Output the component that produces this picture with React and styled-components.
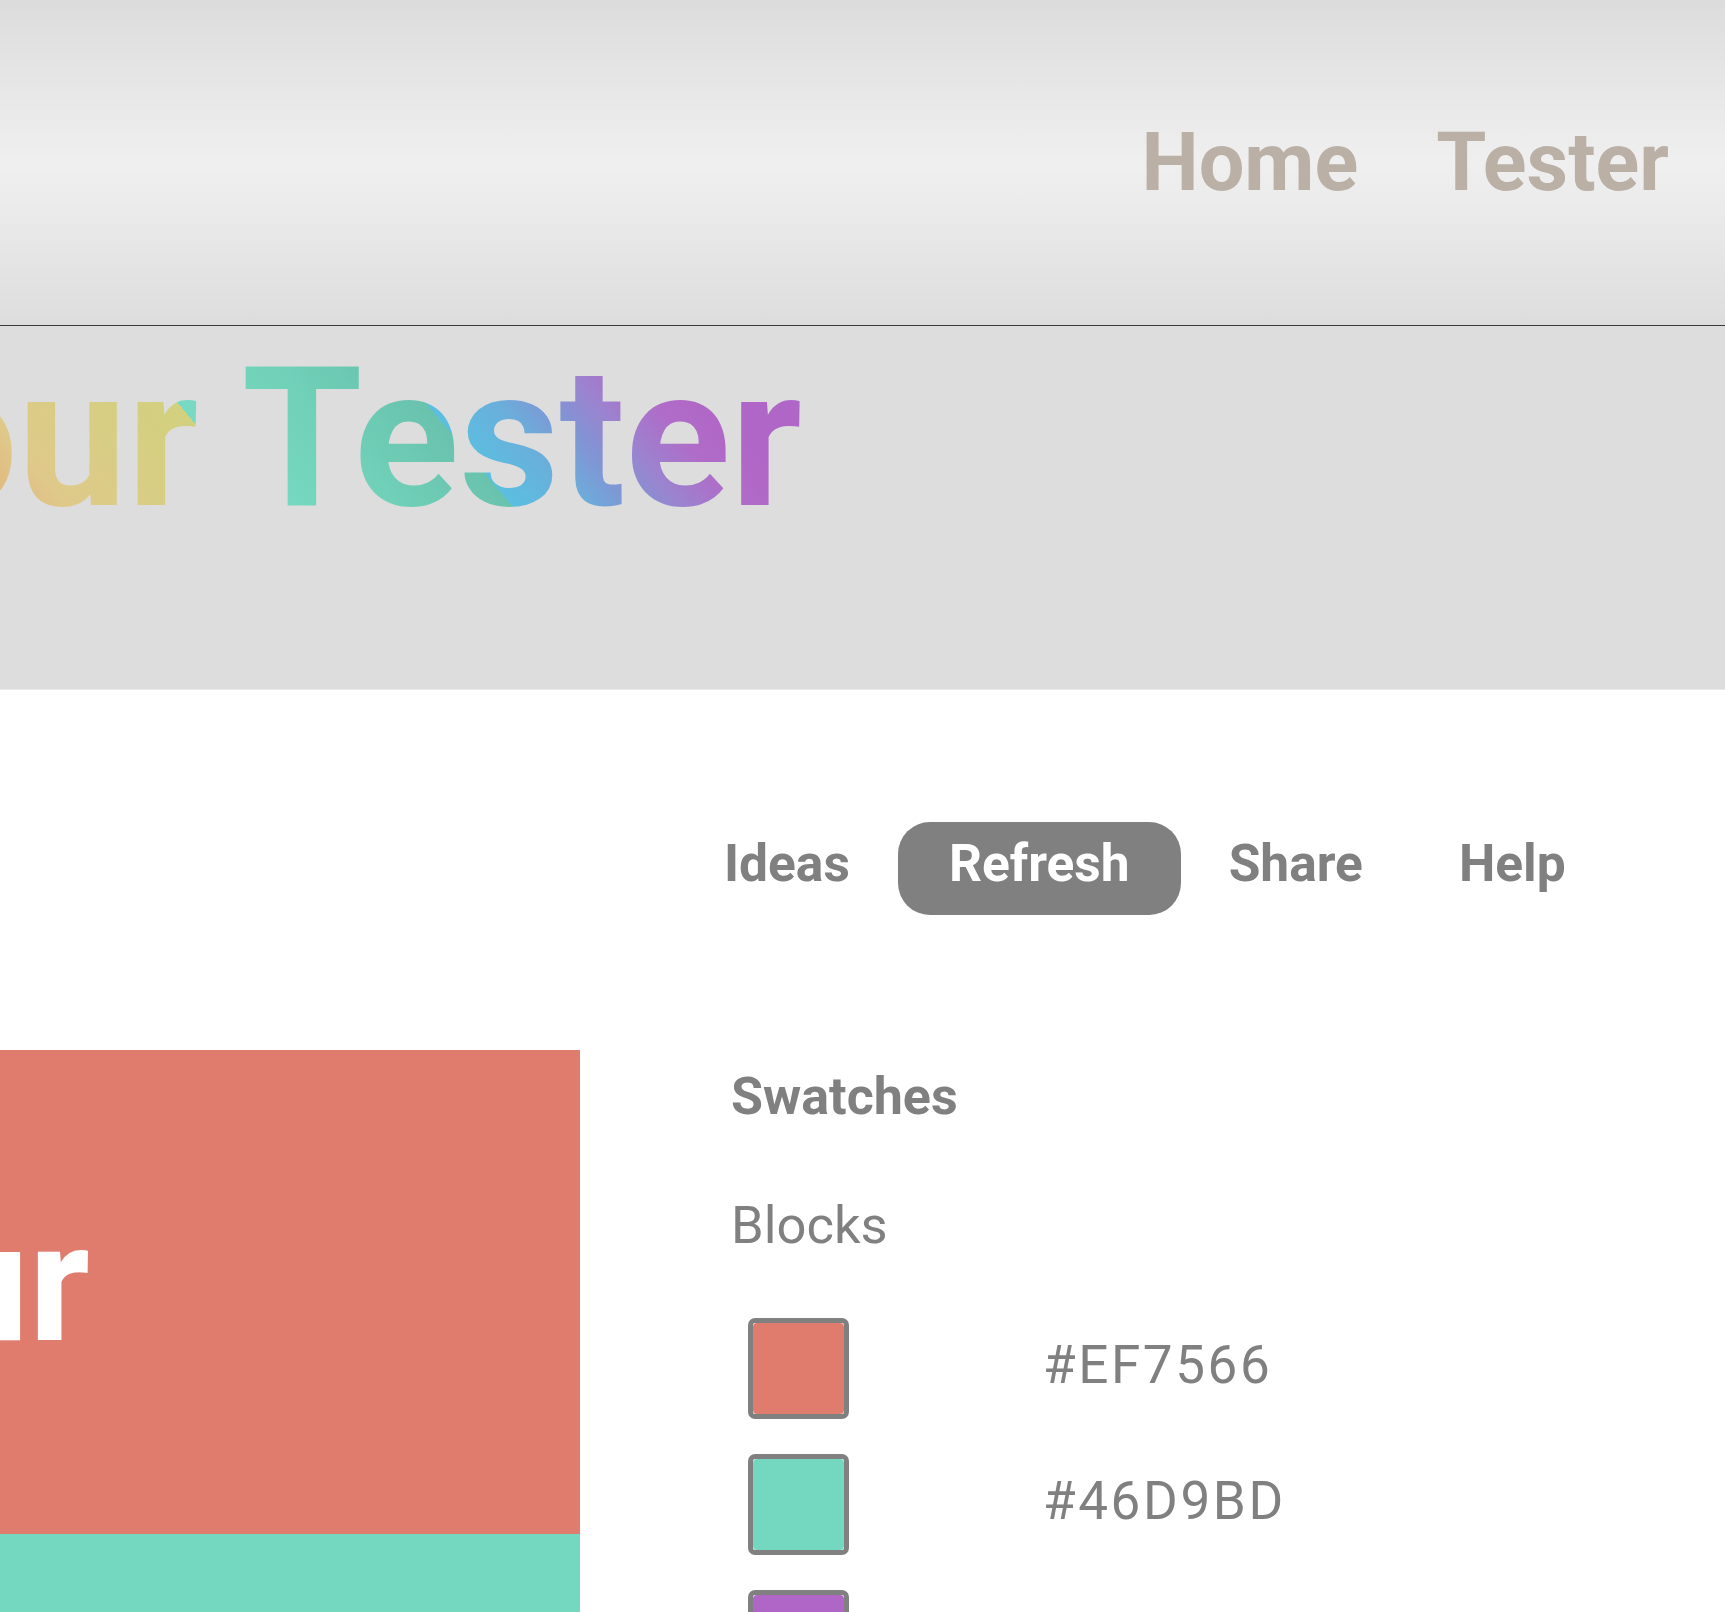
import React from "react"
import styled, { createGlobalStyle } from "styled-components"

const GlobalStyle = createGlobalStyle`
  html, body {
    margin: 0;
    padding: 0;
  }
  body {
    font-family: Roboto, "Liberation Sans", sans-serif;
    background: #ffffff;
  }
  * {
    box-sizing: border-box;
  }
`

const Page = styled.div`
  height: 100vh;
  overflow: hidden;
`

const Header = styled.header`
  height: 326px;
  display: flex;
  align-items: center;
  justify-content: flex-end;
  gap: 78px;
  padding-right: 56px;
  border-bottom: 1px solid #3c3c3c;
  background: linear-gradient(
    to bottom,
    #dcdcdc 0%,
    #e6e6e6 25%,
    #f0eff0 50%,
    #e7e7e7 75%,
    #dddddd 100%
  );
`

const NavLink = styled.a`
  font-size: 81px;
  font-weight: 700;
  color: #bab0a6;
  text-decoration: none;
  &:hover {
    color: #a59a8e;
  }
`

const Band = styled.section`
  height: 364px;
  background: #dddddd;
  border-bottom: 1px solid #e9e9e9;
`

const GradientLayer = styled.div`
  height: 100%;
  padding-top: 15px;
  background: linear-gradient(
    50deg,
    #e3a272 0px,
    #e1b47c 110px,
    #dfc98a 170px,
    #d8cd84 240px,
    #d2d17e 320px,
    #78dac2 320px,
    #70d0b8 420px,
    #69c2ad 510px,
    #5bbfe0 510px,
    #6aaedb 565px,
    #8492d3 610px,
    #9b83cf 640px,
    #b06cc8 685px,
    #b066c6 730px
  );
  -webkit-background-clip: text;
  background-clip: text;
  color: transparent;
`

const TitleRow = styled.div`
  width: 802px;
  display: flex;
  justify-content: flex-end;
`

const Title = styled.h1`
  margin: 0;
  font-size: 195px;
  font-weight: 700;
  line-height: 1;
  white-space: nowrap;
`

const Main = styled.main`
  display: grid;
  grid-template-columns: 580px 1fr;
  column-gap: 96px;
  row-gap: 135px;
  padding-top: 132px;
`

const Toolbar = styled.nav`
  grid-column: 2;
  display: flex;
  justify-self: start;
`

const ToolButton = styled.button`
  border: none;
  padding: ${(p) => (p.$active ? "11px 51px 20px" : "11px 48px 20px")};
  font-family: inherit;
  font-size: 51.5px;
  font-weight: 700;
  line-height: 62px;
  border-radius: 32px;
  cursor: pointer;
  background: ${(p) => (p.$active ? "#808080" : "transparent")};
  color: ${(p) => (p.$active ? "#ffffff" : "#808080")};
`

const BlockStack = styled.div`
  display: flex;
  flex-direction: column;
`

const ColorBlock = styled.div`
  height: 484px;
  padding-top: ${(p) => p.$pad || 0}px;
  background: ${(p) => p.$color};
`

const BlockLabelRow = styled.div`
  width: 90px;
  display: flex;
  justify-content: flex-end;
`

const BlockLabel = styled.span`
  font-size: 167px;
  font-weight: 700;
  line-height: 1;
  color: #ffffff;
  white-space: nowrap;
`

const SwatchPanel = styled.aside`
  padding-left: 55px;
  padding-top: 16px;
  color: #808080;
`

const PanelHeading = styled.h2`
  margin: 0;
  font-size: 52px;
  font-weight: 700;
  line-height: 62px;
`

const SubHeading = styled.h3`
  margin: 66px 0 0;
  font-size: 52.5px;
  font-weight: 400;
  line-height: 62px;
`

const SwatchList = styled.ul`
  list-style: none;
  margin: 62px 0 0;
  padding: 0 0 0 17px;
  display: flex;
  flex-direction: column;
  gap: 35px;
`

const SwatchRow = styled.li`
  display: flex;
  align-items: center;
  gap: 194px;
`

const SwatchBox = styled.div`
  width: 101px;
  height: 101px;
  border: 5px solid #808080;
  border-radius: 7px;
  background: #ffffff;
`

const SwatchFill = styled.div`
  width: 100%;
  height: 100%;
  border-radius: 4px;
  background: ${(p) => p.$color};
`

const HexCode = styled.span`
  font-size: 53px;
  font-weight: 400;
  line-height: 62px;
  letter-spacing: 2.6px;
  margin-bottom: 8px;
`

const swatches = [
  { hex: "#EF7566", shown: "#e07c6d" },
  { hex: "#46D9BD", shown: "#74d7bf" },
  { hex: "#BB66C5", shown: "#b066c6" },
]

const tools = ["Ideas", "Refresh", "Share", "Help"]

export default function App() {
  return (
    <Page>
      <GlobalStyle />
      <Header>
        <NavLink href="#">Home</NavLink>
        <NavLink href="#">Tester</NavLink>
      </Header>

      <Band>
        <GradientLayer>
          <TitleRow>
            <Title>Colour Tester</Title>
          </TitleRow>
        </GradientLayer>
      </Band>

      <Main>
        <Toolbar>
          {tools.map((t) => (
            <ToolButton key={t} $active={t === "Refresh"}>
              {t}
            </ToolButton>
          ))}
        </Toolbar>

        <BlockStack>
          <ColorBlock $color="#e07c6d" $pad={150}>
            <BlockLabelRow>
              <BlockLabel>Colour</BlockLabel>
            </BlockLabelRow>
          </ColorBlock>
          <ColorBlock $color="#74d7bf" />
        </BlockStack>

        <SwatchPanel>
          <PanelHeading>Swatches</PanelHeading>
          <SubHeading>Blocks</SubHeading>
          <SwatchList>
            {swatches.map((s) => (
              <SwatchRow key={s.hex}>
                <SwatchBox>
                  <SwatchFill $color={s.shown} />
                </SwatchBox>
                <HexCode>{s.hex}</HexCode>
              </SwatchRow>
            ))}
          </SwatchList>
        </SwatchPanel>
      </Main>
    </Page>
  )
}
